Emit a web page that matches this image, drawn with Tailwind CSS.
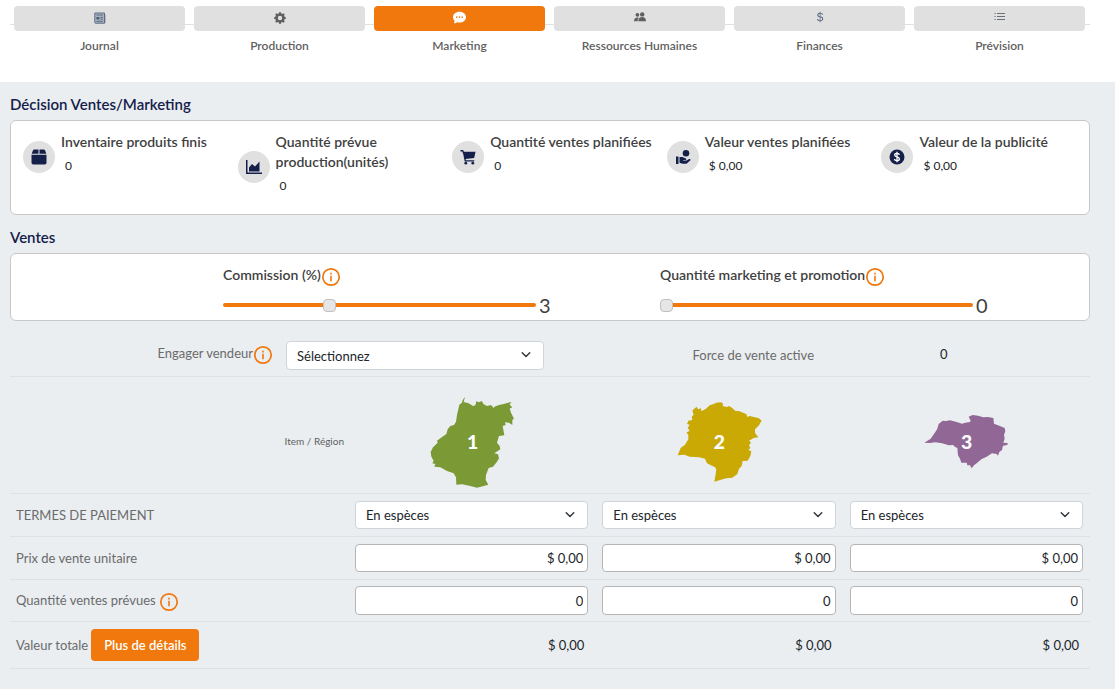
<!DOCTYPE html>
<html lang="fr">
<head>
    <meta charset="UTF-8">
    <meta name="viewport" content="width=device-width, initial-scale=1.0">
    <title>Décision Ventes/Marketing</title>
    <script src="https://cdn.jsdelivr.net/npm/@tailwindcss/browser@4"></script>
</head>
<body class="min-h-screen bg-[#eaeef1] font-['Lato',sans-serif] text-[13px] leading-5 text-[#212529]">
    <!-- shared icons -->
    <svg class="hidden">
        <symbol id="info" viewBox="0 0 20 20">
            <circle cx="10" cy="10" r="8.2" fill="none" stroke="#f0780c" stroke-width="1.7"/>
            <path d="M9.2 5.8h1.6v1.7H9.2zM9.2 8.8h1.6v5.4H9.2z" fill="#f0780c"/>
        </symbol>
        <symbol id="chevron" viewBox="0 0 16 16">
            <path d="M3 5l5 5 5-5" fill="none" stroke="#343a40" stroke-width="2" stroke-linecap="round" stroke-linejoin="round"/>
        </symbol>
    </svg>

    <header class="bg-white pt-1.5 pr-[25px] pb-5 pl-2.5">
        <nav class="relative grid grid-cols-6 text-center text-xs leading-4 font-semibold text-[#5f5f5f]">
            <div class="absolute inset-x-0 top-[18px] h-px bg-[#e0e0e0]"></div>
            <a href="#" class="relative px-1 pr-[5px] pb-2">
                <span class="flex h-[25px] items-center justify-center rounded bg-[#e0e0e0]">
                    <svg class="mb-0.5 size-3" viewBox="0 0 12 12"><path d="M10.5 2.5h1.2v7.8a1 1 0 0 1-1.2.9" fill="#b79bb5"/><path d="M.8 1h9.7v10.2H1.400a.8.8 0 0 1-.6-.8z" fill="#a9b6c6" stroke="#5f6b80" stroke-width="1"/><path d="M2.400 3H9" stroke="#5f6b80"/><path d="M2.400 5h3v2.500h-3z" fill="#4d5a70"/><path d="M6.400 5.400H9M6.400 7.200H9M2.400 9.300H9" stroke="#4d5a70" stroke-width=".8"/></svg>
                </span>
                <span class="mt-[7px] block">Journal</span>
            </a>
            <a href="#" class="relative px-1 pr-[5px] pb-2">
                <span class="flex h-[25px] items-center justify-center rounded bg-[#e0e0e0]">
                    <svg class="mb-0.5 size-3" viewBox="0 0 16 16" fill="#5f5f5f"><path d="M9.405 1.05c-.413-1.4-2.397-1.4-2.81 0l-.1.34a1.464 1.464 0 0 1-2.105.872l-.31-.17c-1.283-.698-2.686.705-1.987 1.987l.169.311c.446.82.023 1.841-.872 2.105l-.34.1c-1.4.413-1.4 2.397 0 2.81l.34.1a1.464 1.464 0 0 1 .872 2.105l-.17.31c-.698 1.283.705 2.686 1.987 1.987l.311-.169a1.464 1.464 0 0 1 2.105.872l.1.34c.413 1.4 2.397 1.4 2.81 0l.1-.34a1.464 1.464 0 0 1 2.105-.872l.31.17c1.283.698 2.686-.705 1.987-1.987l-.169-.311a1.464 1.464 0 0 1 .872-2.105l.34-.1c1.4-.413 1.4-2.397 0-2.81l-.34-.1a1.464 1.464 0 0 1-.872-2.105l.17-.31c.698-1.283-.705-2.686-1.987-1.987l-.311.169a1.464 1.464 0 0 1-2.105-.872zM8 10.93a2.929 2.929 0 1 1 0-5.86 2.929 2.929 0 0 1 0 5.86z"/></svg>
                </span>
                <span class="mt-[7px] block">Production</span>
            </a>
            <a href="#" aria-current="page" class="relative px-1 pr-[5px] pb-2">
                <span class="flex h-[25px] items-center justify-center rounded bg-[#f0780c]">
                    <svg class="mb-0.5 size-[13px]" viewBox="0 0 16 16"><path d="M8 1c4.4 0 8 2.9 8 6.6s-3.600 6.600-8 6.600c-.9 0-1.700-.1-2.500-.300C4.600 14.400 3 15.200.900 15.200c.9-1.100 1.100-2.400 1.100-3.300C.800 10.800 0 9.300 0 7.600 0 3.900 3.600 1 8 1z" fill="#fff"/><circle cx="4.600" cy="7.600" r="1" fill="#f0780c"/><circle cx="8" cy="7.600" r="1" fill="#f0780c"/><circle cx="11.400" cy="7.600" r="1" fill="#f0780c"/></svg>
                </span>
                <span class="mt-[7px] block">Marketing</span>
            </a>
            <a href="#" class="relative px-1 pr-[5px] pb-2">
                <span class="flex h-[25px] items-center justify-center rounded bg-[#e0e0e0]">
                    <svg class="mb-1 h-[10px] w-3" viewBox="0 0 12 10" fill="#5f5f5f"><circle cx="3.400" cy="2.800" r="1.900"/><circle cx="8.200" cy="2.400" r="2.200"/><path d="M0 9.300C0 6.500 1.500 5.400 3.400 5.400c.7 0 1.100.1 1.500.4-.900.800-1.300 1.900-1.300 3.500zM4.300 9.300c0-3 1.700-4.200 3.900-4.200S12 6.300 12 9.300z"/></svg>
                </span>
                <span class="mt-[7px] block">Ressources Humaines</span>
            </a>
            <a href="#" class="relative px-1 pr-[5px] pb-2">
                <span class="flex h-[25px] items-center justify-center rounded bg-[#e0e0e0]">
                    <svg class="mb-1 size-3" viewBox="0 0 16 16" fill="#5b6b85"><path d="M4 10.781c.148 1.667 1.513 2.850 3.591 3.003V15h1.043v-1.216c2.270-.179 3.678-1.438 3.678-3.300 0-1.590-.947-2.510-2.956-3.028l-.722-.187V3.467c1.122.110 1.879.714 2.070 1.616h1.470c-.166-1.600-1.540-2.748-3.540-2.875V1H7.591v1.233c-1.939.230-3.270 1.472-3.270 3.156 0 1.454.966 2.483 2.661 2.917l.610.162v4.031c-1.149-.170-1.940-.800-2.131-1.718H4zm3.391-3.836c-1.043-.263-1.600-.825-1.600-1.616 0-.944.704-1.641 1.800-1.828v3.495l-.200-.050zm1.591 1.872c1.287.323 1.852.859 1.852 1.769 0 1.097-.826 1.828-2.200 1.939V8.730l.348.086z"/></svg>
                </span>
                <span class="mt-[7px] block">Finances</span>
            </a>
            <a href="#" class="relative px-1 pr-[5px] pb-2">
                <span class="flex h-[25px] items-center justify-center rounded bg-[#e0e0e0]">
                    <svg class="mb-1 h-[9px] w-[11px]" viewBox="0 0 11 9" stroke="#6b6f76"><path d="M3 1.500h8M3 4.500h8M3 7.500h8M.5 1.500h1.200M.5 4.500h1.200M.5 7.500h1.200"/></svg>
                </span>
                <span class="mt-[7px] block">Prévision</span>
            </a>
        </nav>
    </header>

    <main class="pt-3 pr-[25px] pb-5 pl-2.5">
        <h1 class="text-[15px] font-semibold text-[#14204a]">Décision Ventes/Marketing</h1>

        <section class="mt-1.5 grid grid-cols-5 items-start rounded-md border border-[#c8c8c8] bg-white pt-[11px] pr-[5px] pb-3 text-[#3f3f3f]">
            <div class="flex items-center gap-1.5 pl-3">
                <span class="flex size-8 shrink-0 items-center justify-center rounded-full bg-[#e0e0e0]">
                    <svg class="size-4" viewBox="0 0 16 16" fill="#14204a"><path d="M3.300.500h4.200v4.300H.700l1.200-3.300a1.500 1.500 0 0 1 1.400-1zM8.500.500h4.200a1.500 1.500 0 0 1 1.400 1l1.200 3.300H8.500zM.500 5.800h15v8a1.700 1.700 0 0 1-1.700 1.700H2.200a1.700 1.700 0 0 1-1.700-1.700z"/></svg>
                </span>
                <div class="pb-1.5">
                    <h2 class="text-sm leading-5 font-semibold">Inventaire produits finis</h2>
                    <p class="pt-1 pl-1 text-xs leading-5 text-[#212529]">0</p>
                </div>
            </div>
            <div class="flex items-center gap-1.5 pl-3">
                <span class="flex size-8 shrink-0 items-center justify-center rounded-full bg-[#e0e0e0]">
                    <svg class="size-4" viewBox="0 0 16 16" fill="#14204a"><path d="M0 1h1.500v12.500H16V15H0z"/><path d="M3 12.500V8.500l3-3.500 3 2.500L13.500 2.500v10z"/></svg>
                </span>
                <div class="pb-1.5">
                    <h2 class="text-sm leading-5 font-semibold">Quantité prévue production(unités)</h2>
                    <p class="pt-1 pl-1 text-xs leading-5 text-[#212529]">0</p>
                </div>
            </div>
            <div class="flex items-center gap-1.5 pl-3">
                <span class="flex size-8 shrink-0 items-center justify-center rounded-full bg-[#e0e0e0]">
                    <svg class="size-4" viewBox="0 0 16 16" fill="#14204a"><path d="M.5 1h2.600l.8 1.800h11.600L14.200 9 5.600 10l.3 1.200h8.300v1.300H4.700L3.200 5 2.200 2.400H.5z"/><circle cx="5.800" cy="14.200" r="1.400"/><circle cx="12.800" cy="14.200" r="1.400"/></svg>
                </span>
                <div class="pb-1.5">
                    <h2 class="text-sm leading-5 font-semibold">Quantité ventes planifiées</h2>
                    <p class="pt-1 pl-1 text-xs leading-5 text-[#212529]">0</p>
                </div>
            </div>
            <div class="flex items-center gap-1.5 pl-3">
                <span class="flex size-8 shrink-0 items-center justify-center rounded-full bg-[#e0e0e0]">
                    <svg class="size-4" viewBox="0 0 16 16" fill="#14204a"><circle cx="11" cy="4.200" r="3.300"/><path d="M1 7.500h2.500V15H1zM4.500 8h3l3.300 1.500c.8.400.6 1.500-.3 1.500H8v.6h3.500l2.700-1.500c1-.5 1.800.6 1 1.300L11.500 14.700H7.500l-3-.9z"/></svg>
                </span>
                <div class="pb-1.5">
                    <h2 class="text-sm leading-5 font-semibold">Valeur ventes planifiées</h2>
                    <p class="pt-1 pl-1 text-xs leading-5 text-[#212529]">$ 0,00</p>
                </div>
            </div>
            <div class="flex items-center gap-1.5 pl-3">
                <span class="flex size-8 shrink-0 items-center justify-center rounded-full bg-[#e0e0e0]">
                    <svg class="size-4" viewBox="0 0 16 16"><circle cx="8" cy="8" r="7.500" fill="#14204a"/><path d="M10.400 5.800C10.200 4.900 9.300 4.400 8 4.400c-1.400 0-2.300.6-2.300 1.600 0 2.400 4.700 1.300 4.700 3.900 0 1.100-1 1.700-2.400 1.700s-2.400-.6-2.500-1.600M8 2.800v10.400" fill="none" stroke="#fff" stroke-width="1.300"/></svg>
                </span>
                <div class="pb-1.5">
                    <h2 class="text-sm leading-5 font-semibold">Valeur de la publicité</h2>
                    <p class="pt-1 pl-1 text-xs leading-5 text-[#212529]">$ 0,00</p>
                </div>
            </div>
        </section>

        <h1 class="mt-3 text-[15px] font-semibold text-[#14204a]">Ventes</h1>

        <section class="mt-1.5 grid grid-cols-[212fr_437fr_429fr] rounded-md border border-[#c8c8c8] bg-white pt-[11px] pb-0.5 text-[#3f3f3f]">
            <div class="col-start-2">
                <div class="flex">
                    <label for="commission" class="text-sm leading-5 font-semibold">Commission (%)</label>
                    <svg class="mt-0.5 size-5"><use href="#info"/></svg>
                </div>
                <div class="mt-1.5 flex items-center gap-[3px]">
                    <input id="commission" type="range" min="0" max="9" value="3" oninput="afficherValeur(this)" class="h-1 w-[313px] appearance-none rounded bg-[#f0780c] [&::-webkit-slider-thumb]:size-[13px] [&::-webkit-slider-thumb]:appearance-none [&::-webkit-slider-thumb]:rounded [&::-webkit-slider-thumb]:border [&::-webkit-slider-thumb]:border-[#c0c0c0] [&::-webkit-slider-thumb]:bg-[#e6e6e6]">
                    <output for="commission" class="text-xl leading-6">3</output>
                </div>
            </div>
            <div class="pb-px">
                <div class="flex">
                    <label for="promotion" class="text-sm leading-5 font-semibold">Quantité marketing et promotion</label>
                    <svg class="mt-0.5 size-5"><use href="#info"/></svg>
                </div>
                <div class="mt-1.5 flex items-center gap-[3px]">
                    <input id="promotion" type="range" min="0" max="9" value="0" oninput="afficherValeur(this)" class="h-1 w-[313px] appearance-none rounded bg-[#f0780c] [&::-webkit-slider-thumb]:size-[13px] [&::-webkit-slider-thumb]:appearance-none [&::-webkit-slider-thumb]:rounded [&::-webkit-slider-thumb]:border [&::-webkit-slider-thumb]:border-[#c0c0c0] [&::-webkit-slider-thumb]:bg-[#e6e6e6]">
                    <output for="promotion" class="text-xl leading-6">0</output>
                </div>
            </div>
        </section>

        <section class="grid grid-cols-[263fr_271fr_270fr_276fr] border-b border-[#dee2e6] pt-5 pb-1.5 text-[#6b6b6b]">
            <div class="flex justify-end">
                <label for="vendeur" class="pt-0.5">Engager vendeur</label>
                <svg class="mt-1 size-5"><use href="#info"/></svg>
            </div>
            <div class="relative ml-[13px]">
                <select id="vendeur" class="h-[29px] w-full appearance-none rounded-sm border border-[#ced4da] bg-white px-2.5 text-[#212529]">
                    <option>Sélectionnez</option>
                </select>
                <svg class="pointer-events-none absolute top-2 right-3 size-3"><use href="#chevron"/></svg>
            </div>
            <p class="pt-1 text-right">Force de vente active</p>
            <p class="pt-[3px] pl-[126px] text-[#212529]">0</p>
        </section>

        <table class="w-full table-fixed">
            <colgroup>
                <col class="w-[31.3%]">
                <col>
                <col>
                <col>
            </colgroup>
            <thead>
                <tr class="border-b border-[#dee2e6]">
                    <th class="pt-3 pr-1 text-right text-[10px] font-normal text-[#5f5f5f]">Item / Région</th>
                    <th class="py-1">
                        <svg class="mx-auto h-[108px] w-[110px]" viewBox="-10 -27 330 324">
                            <path fill="#7b9a35" d="M134 20l-8 12-1 6-8 6-7 31-3 20-6 10-11 3-8 10-4 14-18 13-10 7 2 6-14 14-7 14 2 14 7 12-4 8 9 2-3 8 18 2 20 11 20 7 7 12 1 22 17-1 25 5 20 5 20-5 14-4-8-14 1-15 8-21 13-4 12-15 6-10-3-12-11-3 18-12-2-10-8-10 6-20 16-2-5-28 9-3-2-8 12 1 10 7v-15l5-4-9-18-4-12 8-4-8-8 5-8-23 6-14 3-14 5-2 4-8-9-12 3-10-5-6-10-8 4-8-3-3 12-7 2-13-8-15-4z"/>
                            <text x="157" y="177" text-anchor="middle" fill="#fff" font-size="58" font-weight="900">1</text>
                        </svg>
                    </th>
                    <th class="py-1">
                        <svg class="mx-auto h-[108px] w-[110px]" viewBox="-5 -27 330 324">
                            <path fill="#cba904" d="M93 50L97 58L106 55L107 64L120 57L132 46L142 43L152 38L165 37L172 40L171 48L184 51L190 48L200 54L208 62L222 64L234 69L242 72L245 81L252 78L268 82L280 85L288 92L280 106L268 118L268 128L272 134L278 142L264 144L250 152L256 158L250 166L254 174L248 180L257 184L254 198L246 212L231 213L228 228L220 236L215 252L200 263L182 265L166 269L146 275L149 258L152 238L148 232L124 220L118 206L100 202L72 200L56 194L36 196L45 174L58 164L68 148L68 134L62 128L72 122L66 114L72 104L64 102L68 92L80 90L78 80L84 74L80 62L84 58Z"/>
                            <text x="161" y="177" text-anchor="middle" fill="#fff" font-size="58" font-weight="900">2</text>
                        </svg>
                    </th>
                    <th class="py-1">
                        <svg class="mx-auto h-[108px] w-[110px]" viewBox="-13 -27 330 324">
                            <path fill="#916895" d="M27 158L46 146L60 126L66 116L70 102L82 92L92 93L104 91L124 96L140 101L150 98L164 96L166 92L160 80L172 75L188 77L204 82L218 81L234 84L236 101L252 107L268 114L270 124L266 134L268 146L264 158L277 159L276 165L263 167L260 180L252 186L248 197L244 192L230 190L214 200L198 208L184 220L176 226L169 235L164 226L156 226L154 218L138 218L134 206L128 196L126 174L118 170L114 165L100 166L80 160L60 157L44 159Z"/>
                            <text x="154" y="177" text-anchor="middle" fill="#fff" font-size="58" font-weight="900">3</text>
                        </svg>
                    </th>
                </tr>
            </thead>
            <tbody>
                <tr class="border-b border-[#dee2e6]">
                    <th scope="row" class="pl-1.5 text-left font-normal text-[#6b6b6b]">TERMES DE PAIEMENT</th>
                    <td class="px-[7px] py-[7px]">
                        <div class="relative">
                            <select aria-label="Termes de paiement région 1" class="block h-7 w-full appearance-none rounded-sm border border-[#ced4da] bg-white px-2.5">
                                <option>En espèces</option>
                            </select>
                            <svg class="pointer-events-none absolute top-2 right-3 size-3"><use href="#chevron"/></svg>
                        </div>
                    </td>
                    <td class="px-[7px] py-[7px]">
                        <div class="relative">
                            <select aria-label="Termes de paiement région 2" class="block h-7 w-full appearance-none rounded-sm border border-[#ced4da] bg-white px-2.5">
                                <option>En espèces</option>
                            </select>
                            <svg class="pointer-events-none absolute top-2 right-3 size-3"><use href="#chevron"/></svg>
                        </div>
                    </td>
                    <td class="px-[7px] py-[7px]">
                        <div class="relative">
                            <select aria-label="Termes de paiement région 3" class="block h-7 w-full appearance-none rounded-sm border border-[#ced4da] bg-white px-2.5">
                                <option>En espèces</option>
                            </select>
                            <svg class="pointer-events-none absolute top-2 right-3 size-3"><use href="#chevron"/></svg>
                        </div>
                    </td>
                </tr>
                <tr class="border-b border-[#dee2e6]">
                    <th scope="row" class="pl-1.5 text-left font-normal text-[#6b6b6b]">Prix de vente unitaire</th>
                    <td class="px-[7px] py-[7px]"><input type="text" aria-label="Prix de vente région 1" value="$ 0,00" class="block h-7 w-full rounded-sm border border-[#b5b5b5] bg-white px-1 text-right"></td>
                    <td class="px-[7px] py-[7px]"><input type="text" aria-label="Prix de vente région 2" value="$ 0,00" class="block h-7 w-full rounded-sm border border-[#b5b5b5] bg-white px-1 text-right"></td>
                    <td class="px-[7px] py-[7px]"><input type="text" aria-label="Prix de vente région 3" value="$ 0,00" class="block h-7 w-full rounded-sm border border-[#b5b5b5] bg-white px-1 text-right"></td>
                </tr>
                <tr class="border-b border-[#dee2e6]">
                    <th scope="row" class="pl-1.5 text-left font-normal text-[#6b6b6b]">
                        <div class="flex gap-[3px]">
                            <span>Quantité ventes prévues</span>
                            <svg class="mt-0.5 size-5"><use href="#info"/></svg>
                        </div>
                    </th>
                    <td class="px-[7px] py-1.5"><input type="text" aria-label="Quantité prévue région 1" value="0" class="block h-[29px] w-full rounded-sm border border-[#b5b5b5] bg-white px-1 text-right"></td>
                    <td class="px-[7px] py-1.5"><input type="text" aria-label="Quantité prévue région 2" value="0" class="block h-[29px] w-full rounded-sm border border-[#b5b5b5] bg-white px-1 text-right"></td>
                    <td class="px-[7px] py-1.5"><input type="text" aria-label="Quantité prévue région 3" value="0" class="block h-[29px] w-full rounded-sm border border-[#b5b5b5] bg-white px-1 text-right"></td>
                </tr>
                <tr class="border-b border-[#dee2e6]">
                    <th scope="row" class="py-[7px] pl-1.5 text-left font-normal text-[#6b6b6b]">
                        <div class="flex items-center gap-[3px]">
                            <span>Valeur totale</span>
                            <button type="button" class="h-8 rounded bg-[#f0780c] px-[13px] font-semibold text-white">Plus de détails</button>
                        </div>
                    </th>
                    <td class="pr-[11px] text-right">$ 0,00</td>
                    <td class="pr-[11px] text-right">$ 0,00</td>
                    <td class="pr-[11px] text-right">$ 0,00</td>
                </tr>
            </tbody>
        </table>
    </main>

    <script>
        function afficherValeur(curseur) {
            curseur.nextElementSibling.value = curseur.value;
        }
    </script>
</body>
</html>
